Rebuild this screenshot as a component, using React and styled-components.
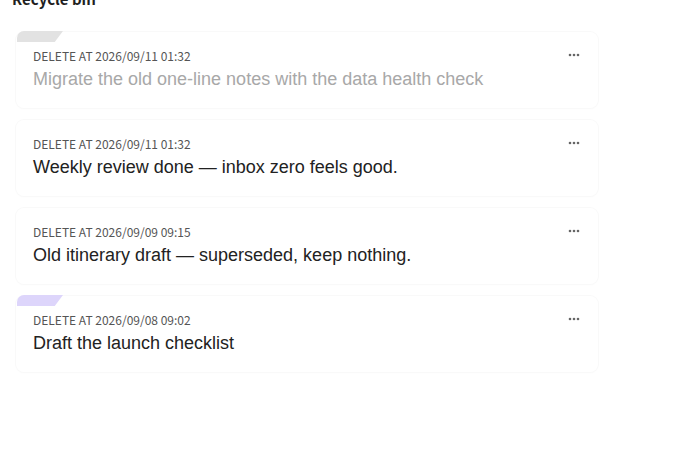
import React from "react"
import styled, { createGlobalStyle } from "styled-components"

const GlobalStyle = createGlobalStyle`
  html, body {
    margin: 0;
    padding: 0;
    background: #fff;
    overflow: hidden;
  }
`

const notes = [
  {
    id: 1,
    deletedAt: "2026/09/11 01:32",
    text: "Migrate the old one-line notes with the data health check",
    faded: true,
    tag: "#e2e2e2",
  },
  {
    id: 2,
    deletedAt: "2026/09/11 01:32",
    text: "Weekly review done — inbox zero feels good.",
  },
  {
    id: 3,
    deletedAt: "2026/09/09 09:15",
    text: "Old itinerary draft — superseded, keep nothing.",
  },
  {
    id: 4,
    deletedAt: "2026/09/08 09:02",
    text: "Draft the launch checklist",
    tag: "#ddd5fb",
  },
]

export default function App() {
  return (
    <Page>
      <GlobalStyle />
      <Title>Recycle bin</Title>
      <List>
        {notes.map(note => (
          <Card key={note.id}>
            {note.tag && <Tag color={note.tag} />}
            <CardHead>
              <DeletedAt>DELETE AT {note.deletedAt}</DeletedAt>
              <MoreButton aria-label="more">
                <svg width="12" height="4" viewBox="0 0 12 4">
                  <circle cx="2" cy="2" r="1.3" fill="#666" />
                  <circle cx="6" cy="2" r="1.3" fill="#666" />
                  <circle cx="10" cy="2" r="1.3" fill="#666" />
                </svg>
              </MoreButton>
            </CardHead>
            <NoteText faded={note.faded}>{note.text}</NoteText>
          </Card>
        ))}
      </List>
    </Page>
  )
}

const Page = styled.div`
  width: 675px;
  height: 450px;
  padding: 0 12px;
  box-sizing: border-box;
  font-family: "Noto Sans CJK SC", "Noto Sans", sans-serif;
`

const Title = styled.h2`
  margin: -11px 0 0;
  font-size: 15px;
  line-height: 20px;
  font-weight: 700;
  color: #1f1f1f;
`

const List = styled.div`
  display: flex;
  flex-direction: column;
  gap: 12px;
  margin-top: 23px;
  padding-left: 4px;
  width: 582px;
`

const Card = styled.div`
  position: relative;
  height: 76px;
  box-sizing: border-box;
  padding: 14px 16px 0 17px;
  background: #fff;
  border-radius: 8px;
  box-shadow: 0 0 0 1px #f9f9f9, 0 1px 2px rgba(0, 0, 0, 0.025);
`

const Tag = styled.div`
  position: absolute;
  top: -1px;
  left: 1px;
  width: 46px;
  height: 11px;
  background: ${props => props.color};
  border-top-left-radius: 7px;
  clip-path: polygon(0 0, 100% 0, 82% 100%, 0 100%);
`

const CardHead = styled.div`
  display: flex;
  align-items: center;
  justify-content: space-between;
  height: 18px;
`

const DeletedAt = styled.span`
  font-size: 12px;
  color: #555;
`

const MoreButton = styled.span`
  display: flex;
  align-items: center;
  margin-right: 2px;
`

const NoteText = styled.div`
  margin-top: 4px;
  font-family: "Liberation Sans", Arial, sans-serif;
  font-size: 18px;
  line-height: 22px;
  color: ${props => (props.faded ? "#a8a8a8" : "#222")};
`
